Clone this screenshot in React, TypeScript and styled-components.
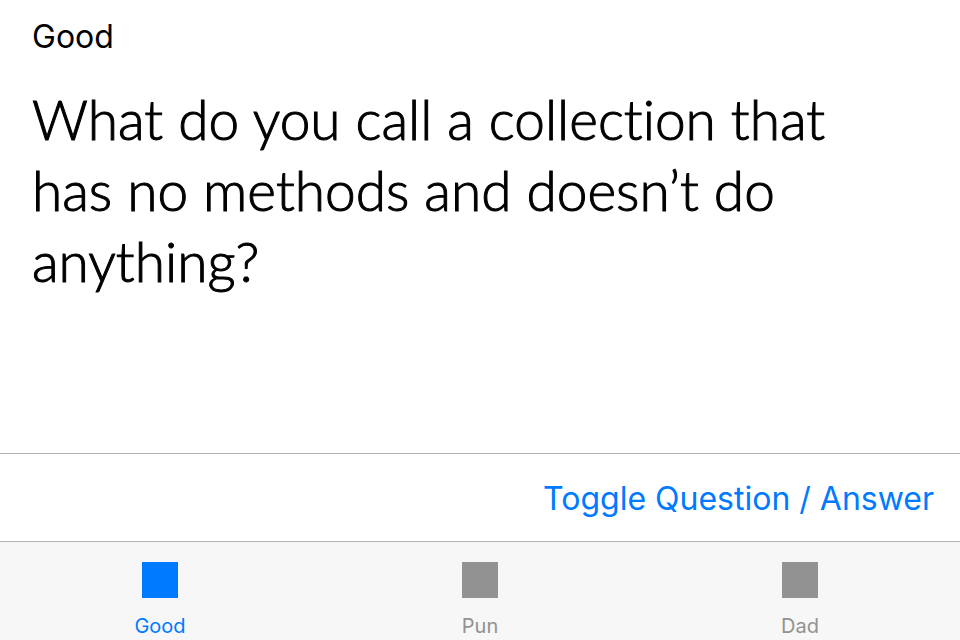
import React, { useState } from "react";
import styled, { createGlobalStyle } from "styled-components";

const GlobalStyle = createGlobalStyle`
  * { box-sizing: border-box; }
  body { margin: 0; background: #fff; }
  button { border: 0; padding: 0; background: none; font: inherit; cursor: pointer; }
`;

const Screen = styled.div`
  display: flex;
  flex-direction: column;
  min-height: 100vh;
  font-family: Inter, sans-serif;
  color: #000;
`;

const Content = styled.main`
  flex: 1;
  padding: 17px 32px 16px;
`;

const Category = styled.h1`
  margin: 0;
  font-size: 32px;
  line-height: 40px;
  font-weight: 400;
`;

const Joke = styled.p`
  margin: 27px 0 0;
  max-width: 848px;
  font-family: Lato, sans-serif;
  font-size: 55px;
  font-weight: 300;
  font-variant-ligatures: none;
  line-height: 71px;
  -webkit-text-stroke: 1px currentColor;
`;

const Toolbar = styled.div`
  display: flex;
  justify-content: flex-end;
  align-items: center;
  padding: 25px 26px 22px;
  border-top: 1px solid #b2b2b2;
`;

const ToggleButton = styled.button`
  color: #007aff;
  font-size: 32px;
  line-height: 40px;
`;

const TabBar = styled.nav`
  display: grid;
  grid-template-columns: repeat(3, 1fr);
  border-top: 1px solid #b2b2b2;
  background: #f7f7f7;
`;

const Tab = styled.button<{ $active: boolean }>`
  display: flex;
  flex-direction: column;
  align-items: center;
  gap: 16px;
  color: ${({ $active }) => ($active ? "#007aff" : "#929292")};
  && { padding: 20px 0 2px; font-size: 20px; line-height: 24px; }
`;

const TabIcon = styled.span`
  width: 36px;
  height: 36px;
  background: currentColor;
`;

const tabs = ["Good", "Pun", "Dad"];

export default function App() {
  const [active, setActive] = useState("Good");
  return (
    <>
      <GlobalStyle />
      <Screen>
        <Content>
          <Category>{active}</Category>
          <Joke>What do you call a collection that has no methods and doesn’t do anything?</Joke>
        </Content>
        <Toolbar>
          <ToggleButton type="button">Toggle Question / Answer</ToggleButton>
        </Toolbar>
        <TabBar>
          {tabs.map((name) => (
            <Tab key={name} type="button" $active={name === active} onClick={() => setActive(name)}>
              <TabIcon />
              {name}
            </Tab>
          ))}
        </TabBar>
      </Screen>
    </>
  );
}
